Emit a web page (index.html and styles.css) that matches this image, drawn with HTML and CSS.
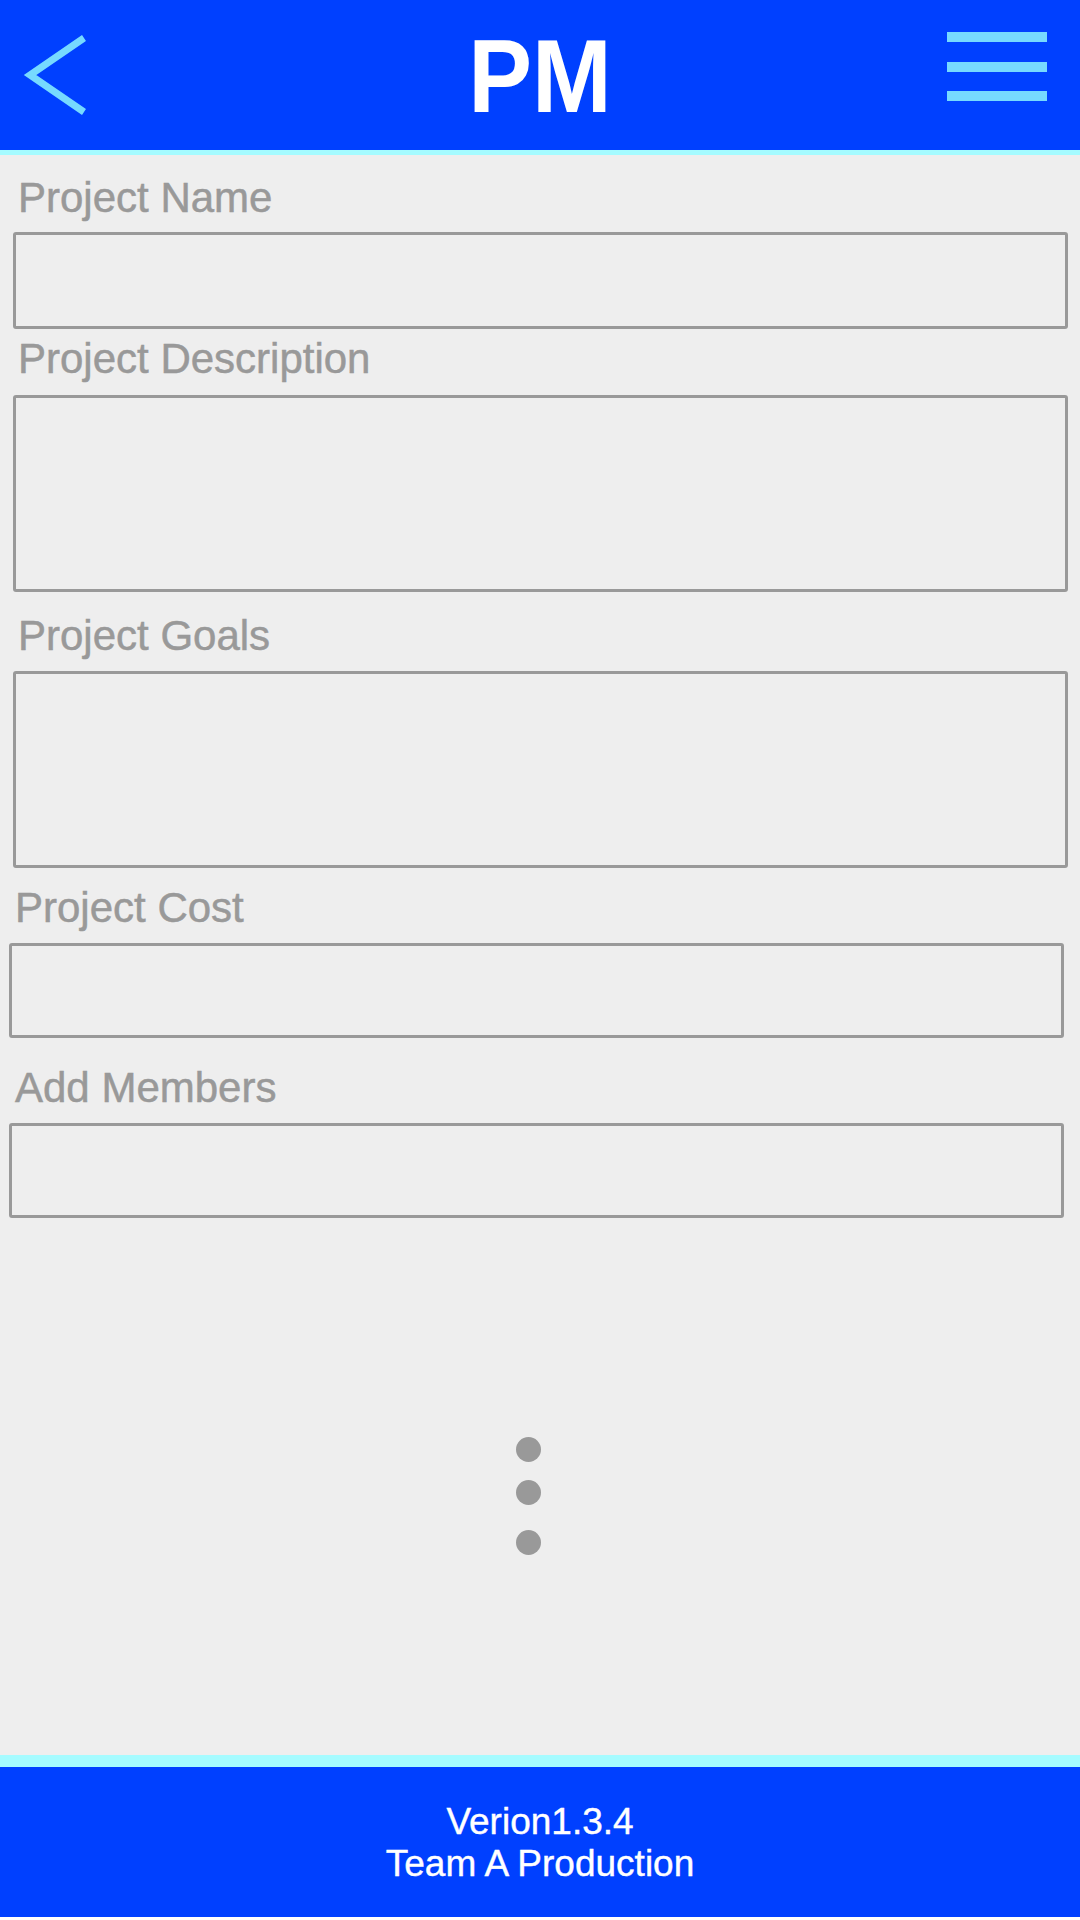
FILE: index.html
```html
<!DOCTYPE html>
<html lang="en">
<head>
<meta charset="utf-8">
<title>PM</title>
<link rel="stylesheet" href="styles.css">
</head>
<body>
<div class="app">
  <header class="topbar">
    <div class="back">
      <svg width="100" height="150" viewBox="0 0 100 150" aria-hidden="true">
        <polyline points="84,38 30,75 84,112" fill="none" stroke="#76DAFF" stroke-width="7" stroke-linejoin="miter" stroke-linecap="butt"/>
      </svg>
    </div>
    <h1 class="title">PM</h1>
    <div class="menu">
      <span class="bar"></span>
      <span class="bar bar-2"></span>
      <span class="bar bar-3"></span>
    </div>
  </header>

  <main class="content">
    <div class="field f1">
      <label class="label">Project Name</label>
      <input class="box box-short" type="text">
    </div>
    <div class="field f2">
      <label class="label">Project Description</label>
      <textarea class="box box-tall"></textarea>
    </div>
    <div class="field f3">
      <label class="label">Project Goals</label>
      <textarea class="box box-tall"></textarea>
    </div>
    <div class="field f4 shifted">
      <label class="label">Project Cost</label>
      <input class="box box-short2" type="text">
    </div>
    <div class="field f5 shifted">
      <label class="label">Add Members</label>
      <input class="box box-short2" type="text">
    </div>

    <div class="dots">
      <span class="dot"></span>
      <span class="dot dot-2"></span>
      <span class="dot dot-3"></span>
    </div>
  </main>

  <footer class="footer">
    <div class="footer-line">Verion1.3.4</div>
    <div class="footer-line">Team A Production</div>
  </footer>
</div>
</body>
</html>
```
FILE: styles.css
```css
html, body {
  margin: 0;
  padding: 0;
  background: #ffffff;
}

.app {
  width: 1080px;
  height: 1920px;
  display: flex;
  flex-direction: column;
  background: #eeeeee;
  font-family: "Liberation Sans", Arial, sans-serif;
}

/* Header */
.topbar {
  height: 150px;
  flex: 0 0 auto;
  background: #0040ff;
  border-bottom: 5px solid #a5fbff;
  display: grid;
  grid-template-columns: 1fr auto 1fr;
  align-items: start;
}

.back {
  height: 150px;
}

.back svg {
  display: block;
}

.title {
  margin: 0;
  padding-top: 24px;
  font-size: 104px;
  line-height: 104px;
  font-weight: bold;
  color: #ffffff;
  letter-spacing: 0;
  text-align: center;
  transform: scaleX(0.92);
}

.menu {
  justify-self: end;
  margin-right: 33px;
  padding-top: 32px;
  display: flex;
  flex-direction: column;
  width: 100px;
}

.bar {
  display: block;
  height: 10px;
  background: #76daff;
}

.bar-2 {
  margin-top: 20px;
}

.bar-3 {
  margin-top: 19px;
}

/* Form */
.content {
  flex: 1 1 auto;
  display: flex;
  flex-direction: column;
}

.field {
  display: flex;
  flex-direction: column;
  padding-left: 13px;
  padding-right: 12px;
}

.field.shifted {
  padding-left: 9px;
  padding-right: 16px;
}

.label {
  display: block;
  font-size: 42px;
  line-height: 46px;
  color: #999999;
  -webkit-text-stroke: 0.5px #999999;
  padding-left: 5px;
  margin-bottom: 12px;
}

.shifted .label {
  padding-left: 6px;
}

.f1 { margin-top: 20px; }
.f1 .label { margin-bottom: 11px; }
.f2 { margin-top: 7px; }
.f2 .label { margin-bottom: 13px; }
.f3 { margin-top: 21px; }
.f4 { margin-top: 17px; }
.f5 { margin-top: 27px; }

.box {
  display: block;
  box-sizing: border-box;
  width: 100%;
  margin: 0;
  padding: 0;
  border: 3px solid #999999;
  border-radius: 3px;
  background: transparent;
  -webkit-appearance: none;
  appearance: none;
  resize: none;
  outline: none;
  font-family: inherit;
}

.box-short { height: 97px; }
.box-tall { height: 197px; }
.box-short2 { height: 95px; }

/* Dots */
.dots {
  display: flex;
  flex-direction: column;
  align-items: center;
  margin-top: 219px;
  width: 1056px;
}

.dot {
  display: block;
  width: 25px;
  height: 25px;
  border-radius: 50%;
  background: #999999;
}

.dot-2 { margin-top: 18px; }
.dot-3 { margin-top: 25px; }

/* Footer */
.footer {
  flex: 0 0 auto;
  height: 150px;
  box-sizing: content-box;
  background: #0040ff;
  border-top: 12px solid #a5fbff;
  border-bottom: 3px solid #ffffff;
  display: flex;
  flex-direction: column;
  align-items: center;
  justify-content: flex-start;
}

.footer-line {
  color: #ffffff;
  font-size: 37px;
  line-height: 42px;
  -webkit-text-stroke: 0.4px #ffffff;
}

.footer-line:first-child {
  margin-top: 34px;
}
```
